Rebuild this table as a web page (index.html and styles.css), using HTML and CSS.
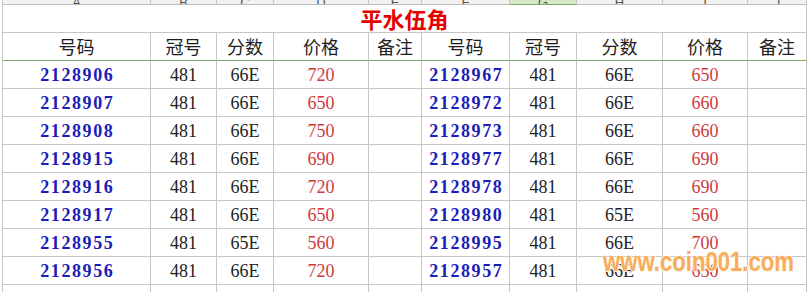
FILE: index.html
```html
<!DOCTYPE html>
<html lang="zh-CN">
<head>
<meta charset="utf-8">
<title>平水伍角</title>
<link rel="stylesheet" href="styles.css">
</head>
<body>
<div class="sheet">
  <div class="colbar">
    <div class="ch">A</div><div class="ch">B</div><div class="ch">C</div><div class="ch">D</div><div class="ch">E</div>
    <div class="ch">F</div><div class="ch sel">G</div><div class="ch">H</div><div class="ch">I</div><div class="ch">J</div>
  </div>
  <div class="grid">
    <div class="title">平水伍角</div>

    <div class="hd">号码</div><div class="hd">冠号</div><div class="hd">分数</div><div class="hd">价格</div><div class="hd">备注</div>
    <div class="hd">号码</div><div class="hd">冠号</div><div class="hd">分数</div><div class="hd">价格</div><div class="hd">备注</div>

    <div class="c no">2128906</div><div class="c">481</div><div class="c">66E</div><div class="c pr">720</div><div class="c"></div>
    <div class="c no">2128967</div><div class="c">481</div><div class="c">66E</div><div class="c pr">650</div><div class="c"></div>

    <div class="c no">2128907</div><div class="c">481</div><div class="c">66E</div><div class="c pr">650</div><div class="c"></div>
    <div class="c no">2128972</div><div class="c">481</div><div class="c">66E</div><div class="c pr">660</div><div class="c"></div>

    <div class="c no">2128908</div><div class="c">481</div><div class="c">66E</div><div class="c pr">750</div><div class="c"></div>
    <div class="c no">2128973</div><div class="c">481</div><div class="c">66E</div><div class="c pr">660</div><div class="c"></div>

    <div class="c no">2128915</div><div class="c">481</div><div class="c">66E</div><div class="c pr">690</div><div class="c"></div>
    <div class="c no">2128977</div><div class="c">481</div><div class="c">66E</div><div class="c pr">690</div><div class="c"></div>

    <div class="c no">2128916</div><div class="c">481</div><div class="c">66E</div><div class="c pr">720</div><div class="c"></div>
    <div class="c no">2128978</div><div class="c">481</div><div class="c">66E</div><div class="c pr">690</div><div class="c"></div>

    <div class="c no">2128917</div><div class="c">481</div><div class="c">66E</div><div class="c pr">650</div><div class="c"></div>
    <div class="c no">2128980</div><div class="c">481</div><div class="c">65E</div><div class="c pr">560</div><div class="c"></div>

    <div class="c no">2128955</div><div class="c">481</div><div class="c">65E</div><div class="c pr">560</div><div class="c"></div>
    <div class="c no">2128995</div><div class="c">481</div><div class="c">66E</div><div class="c pr">700</div><div class="c"></div>

    <div class="c no">2128956</div><div class="c">481</div><div class="c">66E</div><div class="c pr">720</div><div class="c"></div>
    <div class="c no">2128957</div><div class="c">481</div><div class="c">66E</div><div class="c pr">650</div><div class="c"></div>

    <div class="c"></div><div class="c"></div><div class="c"></div><div class="c"></div><div class="c"></div>
    <div class="c"></div><div class="c"></div><div class="c"></div><div class="c"></div><div class="c"></div>
  </div>
  <div class="watermark">www.coin001.com</div>
</div>
</body>
</html>
```

FILE: styles.css
```css
html, body {
  margin: 0;
  padding: 0;
  background: #ffffff;
}

body {
  width: 808px;
  height: 292px;
  overflow: hidden;
}

.sheet {
  position: relative;
  width: 808px;
  height: 292px;
  overflow: hidden;
}

.colbar,
.grid {
  display: grid;
  grid-template-columns: 148px 66px 57px 95px 53px 88px 67px 86px 85px 59px;
  margin-left: 2px;
  border-left: 1px solid #c6c6c6;
  width: 804px;
}

.colbar {
  height: 5px;
  background: #f1f1f1;
  overflow: hidden;
}

.ch {
  box-sizing: border-box;
  height: 5px;
  border-right: 1px solid #c6c6c6;
  border-bottom: 1px solid #bdbdbd;
  font: 13px/6px "Liberation Sans", Arial, sans-serif;
  color: #555555;
  text-align: center;
  overflow: hidden;
}

.ch.sel {
  background: #d6e8c8;
  border-bottom: 1px solid #7fa860;
}

.title {
  grid-column: 1 / -1;
  box-sizing: border-box;
  height: 28px;
  border-right: 1px solid #c6c6c6;
  border-bottom: 1px solid #c6c6c6;
  text-align: center;
  font: 700 22px/27px "Noto Sans CJK SC", sans-serif;
  color: #e60000;
}

.hd,
.c {
  box-sizing: border-box;
  height: 28px;
  border-right: 1px solid #c6c6c6;
  border-bottom: 1px solid #c6c6c6;
  text-align: center;
  white-space: nowrap;
  overflow: hidden;
}

.hd {
  border-bottom: 1px solid #82aa64;
  font: 400 18px/27px "Noto Sans CJK SC", sans-serif;
  color: #1e1e1e;
}

.c {
  font: 400 18px/29px "Liberation Serif", "Times New Roman", serif;
  color: #1e1e1e;
}

.c.no {
  font-weight: 700;
  color: #1c1cb8;
  letter-spacing: 1.6px;
  text-indent: 1.6px;
}

.c.pr {
  color: #cc3a3e;
}

.watermark {
  position: absolute;
  left: 603px;
  top: 248px;
  font: 700 28px/28px "Liberation Sans", Arial, sans-serif;
  color: rgba(246, 163, 72, 0.9);
  text-shadow: 1px 0 0 #fff6e8, -1px 0 0 #fff6e8, 0 1px 0 #fff6e8, 0 -1px 0 #fff6e8;
  white-space: nowrap;
  transform: scaleX(0.79);
  transform-origin: 0 0;
}
```
